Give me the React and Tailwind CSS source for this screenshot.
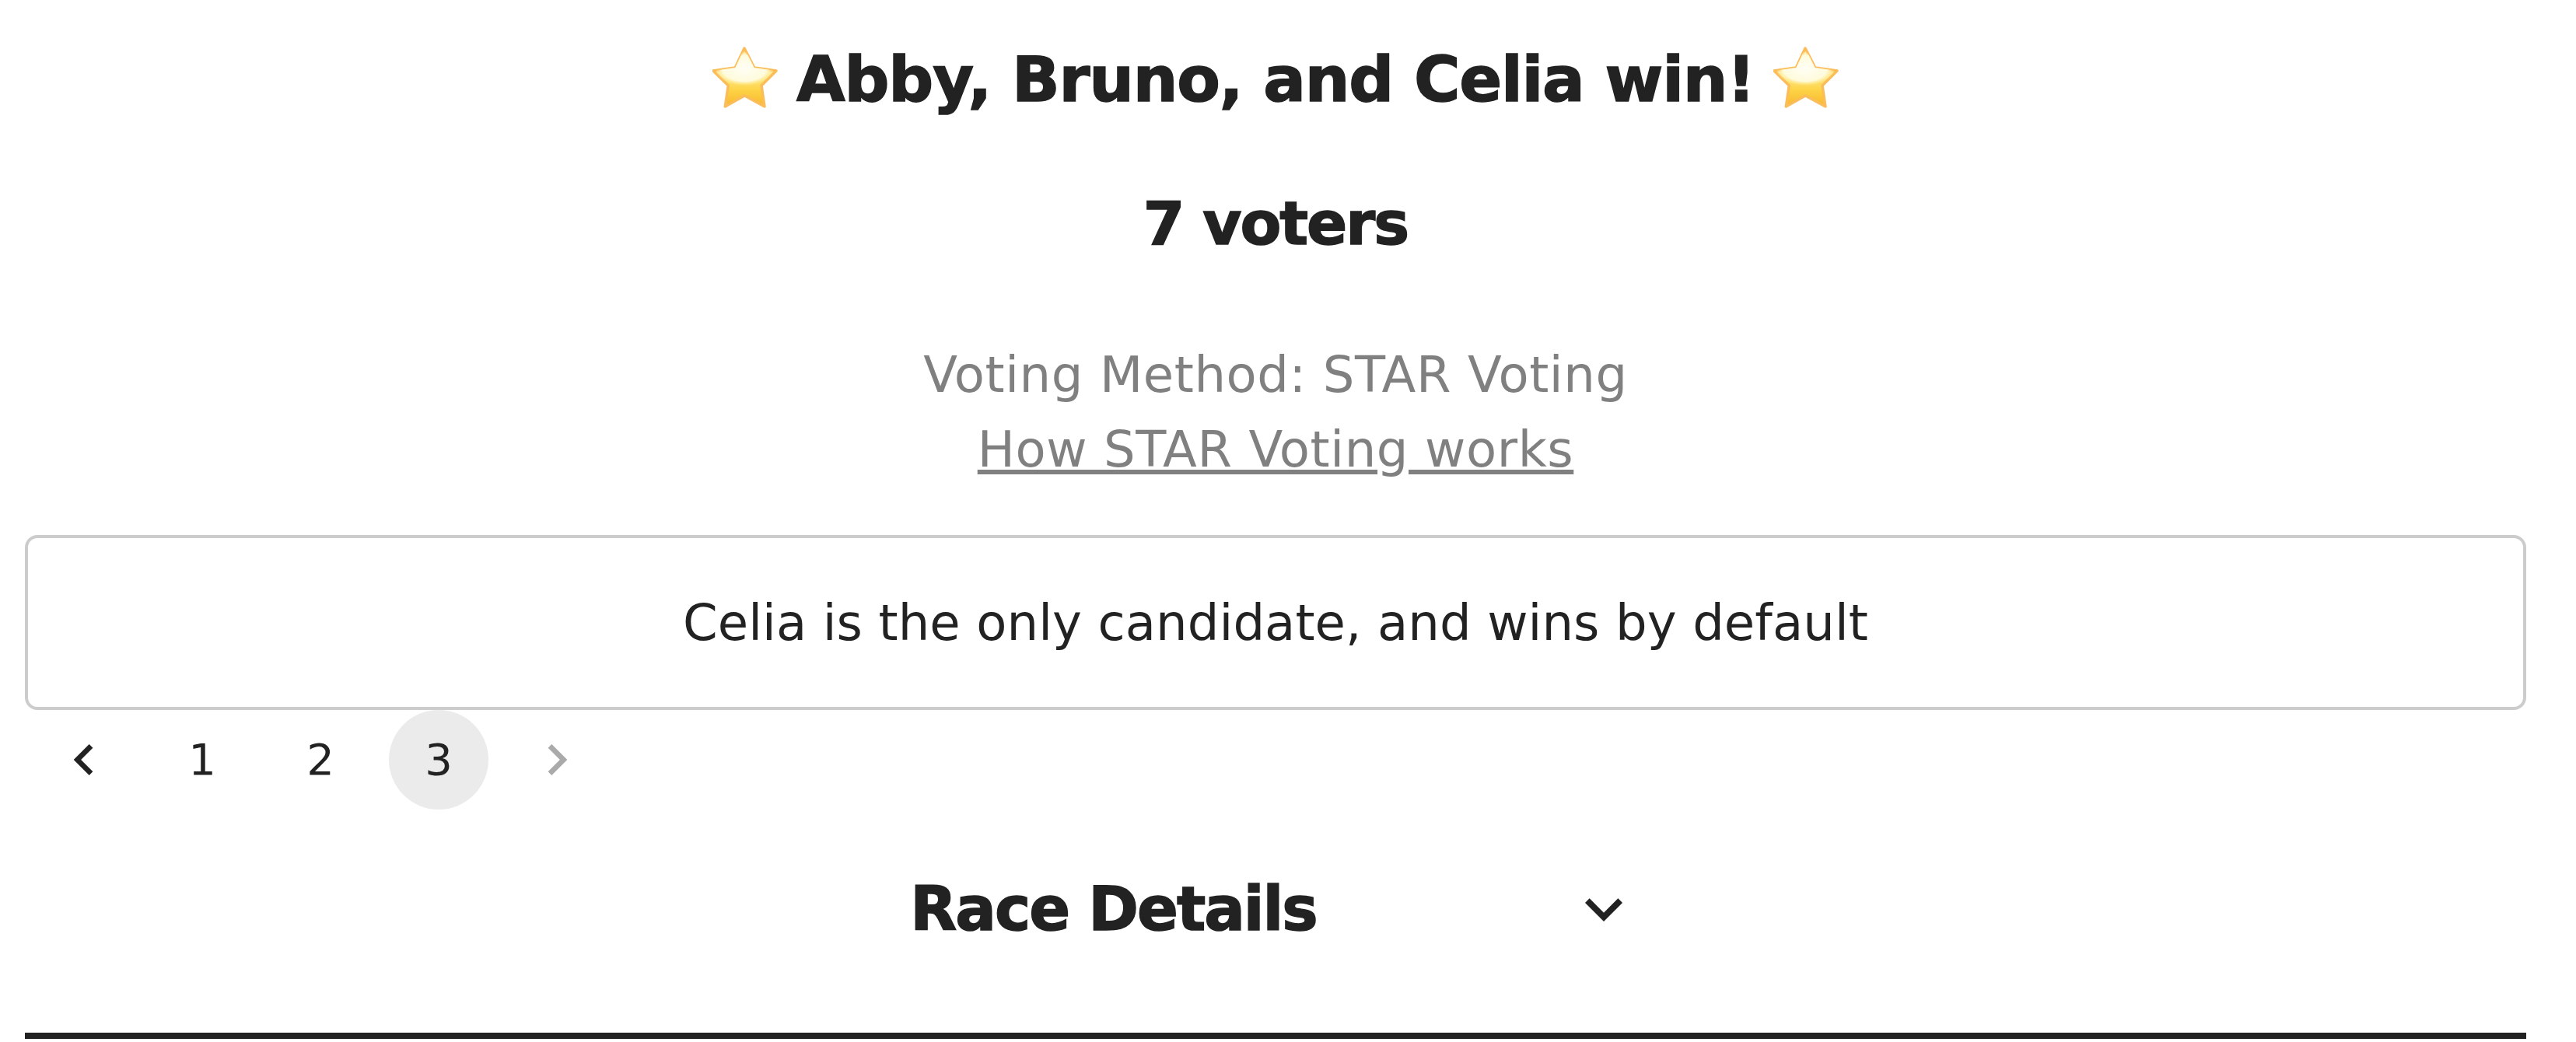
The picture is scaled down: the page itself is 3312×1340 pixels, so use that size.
import React from 'react'

const body = { fontFamily: '"DejaVu Sans", Verdana, sans-serif' }

function Star({ id }) {
  const pts = '41,2 53.7,27 82,31 63,50 67,77 41.3,63 16.3,77 20.3,50 1,31 29.3,27'
  return (
    <svg width="84" height="80" viewBox="0 0 84 80" className="shrink-0">
      <defs>
        <linearGradient id={`${id}-fill`} x1="0" y1="0" x2="0" y2="1">
          <stop offset="0" stopColor="#fff3b8" />
          <stop offset="0.5" stopColor="#ffe680" />
          <stop offset="0.72" stopColor="#fdd345" />
          <stop offset="1" stopColor="#f8b62e" />
        </linearGradient>
        <radialGradient id={`${id}-glow`} cx="0.5" cy="0.5" r="0.5">
          <stop offset="0" stopColor="#fffef5" />
          <stop offset="0.75" stopColor="#fffbdc" />
          <stop offset="1" stopColor="#fff3b0" stopOpacity="0" />
        </radialGradient>
        <clipPath id={`${id}-clip`}>
          <polygon points={pts} />
        </clipPath>
      </defs>
      <polygon points={pts} fill={`url(#${id}-fill)`} stroke="#fbbd5a" strokeWidth="3.5" strokeLinejoin="round" />
      <g clipPath={`url(#${id}-clip)`}>
        <ellipse cx="41" cy="28" rx="38" ry="22" fill={`url(#${id}-glow)`} />
      </g>
    </svg>
  )
}

function PageItem({ children, active }) {
  return (
    <li className={`w-[128px] h-[128px] mx-[12px] rounded-full flex items-center justify-center text-[56px] leading-none ${active ? 'bg-[#ebebeb]' : ''}`}>
      {children}
    </li>
  )
}

export default function App() {
  return (
    <div className="w-[3312px] h-[1340px] overflow-hidden bg-white pl-[32px] pr-[64px] text-[#222222] flex flex-col" style={body}>
      <h1 className="h-[208px] flex items-start justify-center gap-[24px] pt-[60px] m-0 text-[81px] leading-[84px] font-bold tracking-[-1.2px] [-webkit-text-stroke:1.5px_#222222]">
        <Star id="a" />
        <span>Abby, Bruno, and Celia win!</span>
        <Star id="b" />
      </h1>
      <h2 className="text-center text-[77px] leading-[80px] font-bold h-[168px] pt-[40px] tracking-[-2px] [-webkit-text-stroke:1.5px_#222222]">
        7 voters
      </h2>
      <div className="text-center text-[64px] leading-[96px] text-[#808080] h-[312px] pt-[58px] tracking-[0.6px]">
        <div>Voting Method: STAR Voting</div>
        <a className="underline">How STAR Voting works</a>
      </div>
      <div className="h-[225px] border-4 border-[#cccccc] rounded-[16px] flex items-center justify-center text-[64px] leading-none tracking-[0.1px]">
        Celia is the only candidate, and wins by default
      </div>
      <ul className="flex items-center h-[128px] m-0 p-0 list-none">
        <PageItem>
          <svg width="80" height="80" viewBox="0 0 24 24" fill="#222222"><path d="M15.41 7.41 14 6l-6 6 6 6 1.41-1.41L10.83 12z" /></svg>
        </PageItem>
        <PageItem>1</PageItem>
        <PageItem>2</PageItem>
        <PageItem active>3</PageItem>
        <PageItem>
          <svg width="80" height="80" viewBox="0 0 24 24" fill="#222222" opacity="0.38"><path d="M10 6 8.59 7.41 13.17 12l-4.58 4.59L10 18l6-6z" /></svg>
        </PageItem>
      </ul>
      <div className="flex items-center justify-center gap-[321px] h-[287px] pb-[31px]">
        <span className="text-[78px] leading-none font-bold tracking-[-2px] [-webkit-text-stroke:1.5px_#222222]">Race Details</span>
        <svg width="96" height="96" viewBox="0 0 24 24" fill="#222222"><path d="M16.59 8.59 12 13.17 7.41 8.59 6 10l6 6 6-6z" /></svg>
      </div>
      <hr className="h-[8px] border-0 bg-[#222222] m-0 shrink-0" />
    </div>
  )
}
